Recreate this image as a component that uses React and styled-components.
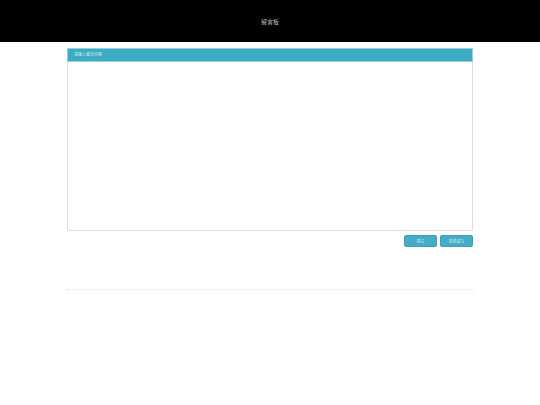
import React from 'react'
import styled, { createGlobalStyle } from 'styled-components'

const GlobalStyle = createGlobalStyle`
  body {
    margin: 0;
    background: #fff;
    font-family: "Liberation Sans", "Noto Sans CJK SC", sans-serif;
  }
`

const App = () => {
  return (
    <>
      <GlobalStyle />
      <Header>
        <HeaderTitle>留言板</HeaderTitle>
      </Header>
      <Container>
        <Panel>
          <PanelHeading>请输入留言内容</PanelHeading>
          <PanelBody />
        </Panel>
        <Actions>
          <Button>提交</Button>
          <Button>重新填写</Button>
        </Actions>
        <Divider />
      </Container>
    </>
  )
}

const Header = styled.header`
  height: 42px;
  background: #000;
  display: flex;
  align-items: center;
  justify-content: center;
`

const HeaderTitle = styled.h1`
  margin: 0;
  font-size: 6px;
  font-weight: normal;
  color: #bbb;
`

const Container = styled.div`
  width: 406px;
  margin: 6px auto 0;
`

const Panel = styled.div`
  border: 1px solid #dcdcdc;
  border-radius: 2px;
  background: #fff;
`

const PanelHeading = styled.div`
  height: 12px;
  line-height: 12px;
  padding: 0 6px;
  background: #3eaac3;
  border: 1px solid #8fd3e2;
  margin: -1px -1px 0;
  font-size: 4px;
  color: #d8eef3;
`

const PanelBody = styled.div`
  height: 168px;
`

const Actions = styled.div`
  display: flex;
  justify-content: flex-end;
  gap: 3px;
  margin-top: 4px;
`

const Button = styled.button`
  width: 33px;
  height: 12px;
  padding: 0;
  border: 1px solid #3a9fb8;
  border-radius: 2px;
  background: #44acc6;
  color: #cfeaf1;
  font-family: inherit;
  font-size: 4px;
`

const Divider = styled.hr`
  margin: 42px 0 0;
  border: 0;
  border-top: 1px dotted #e4e4e4;
`

export default App
